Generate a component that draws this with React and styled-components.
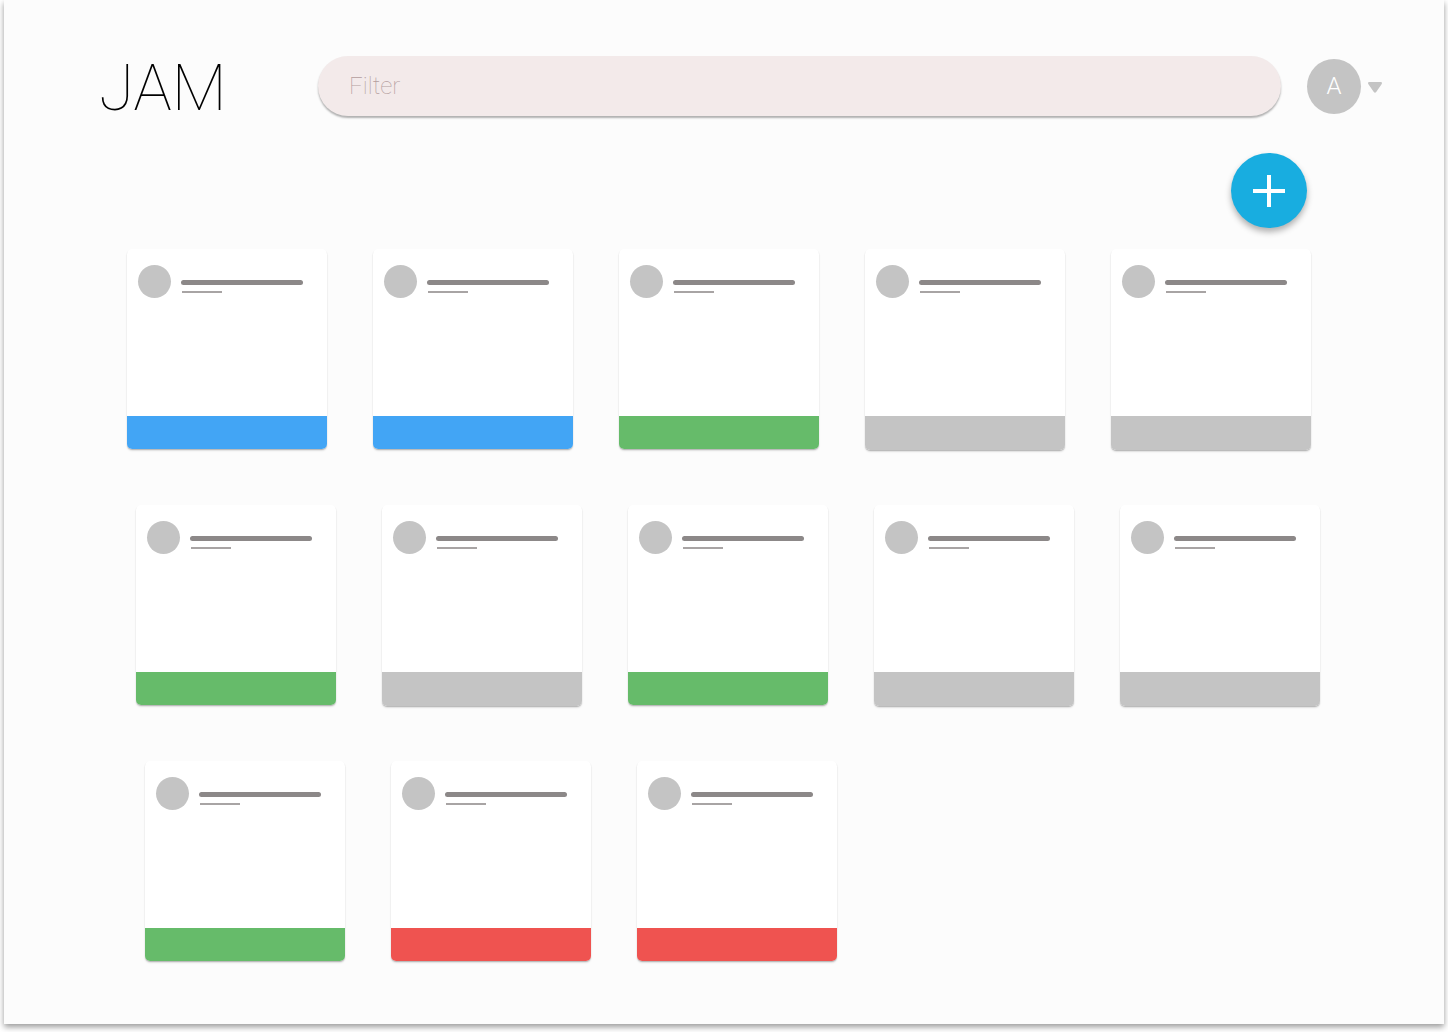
import React from 'react'
import styled, { createGlobalStyle } from 'styled-components'

const Global = createGlobalStyle`
    html, body {
        margin: 0;
        padding: 0;
        background: #fff;
        font-family: Roboto, "Liberation Sans", sans-serif;
    }
`

const Page = styled.div`
    width: 1448px;
    height: 1032px;
    overflow: hidden;
    padding-left: 4px;
    box-sizing: border-box;
`

const Frame = styled.div`
    width: 1440px;
    height: 1024px;
    box-sizing: border-box;
    background: #fcfcfc;
    box-shadow: 0 3px 6px rgba(0,0,0,0.4);
    padding-top: 56px;
`

const Header = styled.header`
    display: flex;
    align-items: flex-start;
    height: 60px;
`

const Logo = styled.h1`
    width: 314px;
    box-sizing: border-box;
    margin: 0;
    padding-left: 95px;
    font-size: 64px;
    line-height: 66px;
    font-weight: 100;
    color: #000;
    white-space: nowrap;
`

const Filter = styled.div`
    width: 963px;
    height: 60px;
    box-sizing: border-box;
    padding: 0 31px;
    display: flex;
    align-items: center;
    background: #f3eaea;
    border-radius: 30px;
    box-shadow: 0 2px 2px rgba(0,0,0,0.3);
    color: #b49e9e;
    font-size: 24px;
    font-weight: 100;
`

const Avatar = styled.div`
    width: 54px;
    height: 55px;
    box-sizing: border-box;
    padding-bottom: 2px;
    margin: 3px 0 0 26px;
    border-radius: 50%;
    background: #c4c4c4;
    color: #fff;
    display: flex;
    align-items: center;
    justify-content: center;
    font-size: 24px;
    font-weight: 300;
`

const Caret = styled.svg`
    width: 14px;
    height: 11px;
    margin: 26px 0 0 7px;
    display: block;
`

const Actions = styled.div`
    display: flex;
    justify-content: flex-end;
    padding: 37px 137px 0 0;
`

const Fab = styled.button`
    width: 76px;
    height: 75px;
    padding: 0;
    border: 0;
    border-radius: 50%;
    background: #18ade0;
    box-shadow: 0 4px 6px rgba(0,0,0,0.3);
    display: flex;
    align-items: center;
    justify-content: center;
`

const Rows = styled.div`
    display: flex;
    flex-direction: column;
    gap: 56px;
    padding-top: 21px;
`

const Row = styled.div`
    display: flex;
    align-items: flex-start;
    gap: 46px;
    height: 200px;
    padding-left: ${p => p.$indent}px;
`

const Card = styled.article`
    width: 200px;
    display: flex;
    flex-direction: column;
    background: #fff;
    border-radius: 5px;
    overflow: hidden;
    box-shadow: 0 1px 1px rgba(0,0,0,0.2), 0 2px 2px rgba(0,0,0,0.1);
`

const CardHead = styled.div`
    height: 167px;
    box-sizing: border-box;
    display: flex;
    align-items: flex-start;
    padding: 16px 0 0 11px;
`

const Dot = styled.div`
    width: 33px;
    height: 33px;
    border-radius: 50%;
    background: #c4c4c4;
`

const Lines = styled.div`
    display: flex;
    flex-direction: column;
    gap: 6px;
    margin: 14.5px 0 0 9.5px;
`

const Title = styled.div`
    width: 122.5px;
    height: 5.5px;
    border-radius: 3px;
    background: #8c8888;
`

const Sub = styled.div`
    width: 40px;
    height: 2px;
    margin-left: 1.5px;
    background: #a8a4a4;
`

const Bar = styled.div`
    height: ${p => p.$color === '#c4c4c4' ? 34 : 33}px;
    background: ${p => p.$color};
`

const blue = '#42a5f5'
const green = '#66bb6a'
const grey = '#c4c4c4'
const red = '#ef5350'

const rows = [
    { indent: 123, bars: [blue, blue, green, grey, grey] },
    { indent: 132, bars: [green, grey, green, grey, grey] },
    { indent: 141, bars: [green, red, red] },
]

export default function App() {
    return (
        <Page>
            <Global />
            <Frame>
                <Header>
                    <Logo>JAM</Logo>
                    <Filter>Filter</Filter>
                    <Avatar>A</Avatar>
                    <Caret viewBox="0 0 14 11">
                        <path d="M1.2 0 H12.8 Q14 0 14 1 Q14 1.6 13.4 2.4 L8.2 10 Q7 11.4 5.8 10 L0.6 2.4 Q0 1.6 0 1 Q0 0 1.2 0 Z" fill="#c4c4c4" />
                    </Caret>
                </Header>
                <Actions>
                    <Fab aria-label="Add">
                        <svg width="32" height="32" viewBox="0 0 32 32">
                            <path d="M14 0h4v14h14v4H18v14h-4V18H0v-4h14z" fill="#fff" />
                        </svg>
                    </Fab>
                </Actions>
                <Rows>
                    {rows.map((row) => (
                        <Row key={row.indent} $indent={row.indent}>
                            {row.bars.map((color, i) => (
                                <Card key={i}>
                                    <CardHead>
                                        <Dot />
                                        <Lines>
                                            <Title />
                                            <Sub />
                                        </Lines>
                                    </CardHead>
                                    <Bar $color={color} />
                                </Card>
                            ))}
                        </Row>
                    ))}
                </Rows>
            </Frame>
        </Page>
    )
}
